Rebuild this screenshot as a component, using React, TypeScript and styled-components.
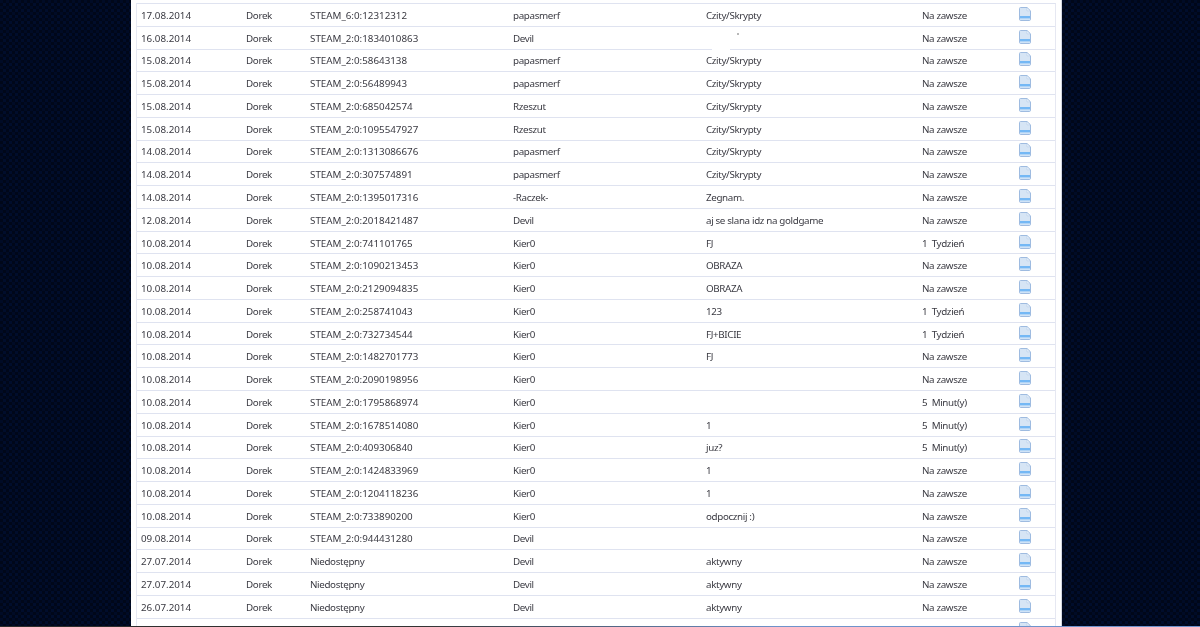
import React from 'react'
import styled, { createGlobalStyle } from 'styled-components'

type Ban = [string, string, string, string, string]

const bans: Ban[] = [
  ['17.08.2014', 'STEAM_6:0:12312312', 'papasmerf', 'Czity/Skrypty', 'Na zawsze'],
  ['16.08.2014', 'STEAM_2:0:1834010863', 'Devil', '', 'Na zawsze'],
  ['15.08.2014', 'STEAM_2:0:58643138', 'papasmerf', 'Czity/Skrypty', 'Na zawsze'],
  ['15.08.2014', 'STEAM_2:0:56489943', 'papasmerf', 'Czity/Skrypty', 'Na zawsze'],
  ['15.08.2014', 'STEAM_2:0:685042574', 'Rzeszut', 'Czity/Skrypty', 'Na zawsze'],
  ['15.08.2014', 'STEAM_2:0:1095547927', 'Rzeszut', 'Czity/Skrypty', 'Na zawsze'],
  ['14.08.2014', 'STEAM_2:0:1313086676', 'papasmerf', 'Czity/Skrypty', 'Na zawsze'],
  ['14.08.2014', 'STEAM_2:0:307574891', 'papasmerf', 'Czity/Skrypty', 'Na zawsze'],
  ['14.08.2014', 'STEAM_2:0:1395017316', '-Raczek-', 'Zegnam.', 'Na zawsze'],
  ['12.08.2014', 'STEAM_2:0:2018421487', 'Devil', 'aj se slana idz na goldgame', 'Na zawsze'],
  ['10.08.2014', 'STEAM_2:0:741101765', 'Kier0', 'FJ', '1  Tydzień'],
  ['10.08.2014', 'STEAM_2:0:1090213453', 'Kier0', 'OBRAZA', 'Na zawsze'],
  ['10.08.2014', 'STEAM_2:0:2129094835', 'Kier0', 'OBRAZA', 'Na zawsze'],
  ['10.08.2014', 'STEAM_2:0:258741043', 'Kier0', '123', '1  Tydzień'],
  ['10.08.2014', 'STEAM_2:0:732734544', 'Kier0', 'FJ+BICIE', '1  Tydzień'],
  ['10.08.2014', 'STEAM_2:0:1482701773', 'Kier0', 'FJ', 'Na zawsze'],
  ['10.08.2014', 'STEAM_2:0:2090198956', 'Kier0', '', 'Na zawsze'],
  ['10.08.2014', 'STEAM_2:0:1795868974', 'Kier0', '', '5  Minut(y)'],
  ['10.08.2014', 'STEAM_2:0:1678514080', 'Kier0', '1', '5  Minut(y)'],
  ['10.08.2014', 'STEAM_2:0:409306840', 'Kier0', 'juz?', '5  Minut(y)'],
  ['10.08.2014', 'STEAM_2:0:1424833969', 'Kier0', '1', 'Na zawsze'],
  ['10.08.2014', 'STEAM_2:0:1204118236', 'Kier0', '1', 'Na zawsze'],
  ['10.08.2014', 'STEAM_2:0:733890200', 'Kier0', 'odpocznij :)', 'Na zawsze'],
  ['09.08.2014', 'STEAM_2:0:944431280', 'Devil', '', 'Na zawsze'],
  ['27.07.2014', 'Niedostępny', 'Devil', 'aktywny', 'Na zawsze'],
  ['27.07.2014', 'Niedostępny', 'Devil', 'aktywny', 'Na zawsze'],
  ['26.07.2014', 'Niedostępny', 'Devil', 'aktywny', 'Na zawsze'],
]

const dots = encodeURIComponent(
  '<svg xmlns="http://www.w3.org/2000/svg" width="6" height="6"><rect width="6" height="6" fill="#000719"/><rect x="0" y="0" width="3" height="3" fill="#000b26"/><rect x="3" y="3" width="3" height="3" fill="#000d2c"/></svg>',
)

const GlobalStyle = createGlobalStyle`
  html, body {
    margin: 0;
    height: 627px;
    overflow: hidden;
    background: #000719 url("data:image/svg+xml,${dots}");
    font-family: "Noto Sans", sans-serif;
  }
`

const Page = styled.div`
  height: 627px;
  overflow: hidden;
  display: flex;
  justify-content: flex-start;
  padding-left: 131px;
  box-sizing: border-box;
`

const Card = styled.main`
  width: 931px;
  height: 627px;
  box-sizing: border-box;
  padding: 3px 5px 0;
  background: #fff;
  border-right: 1px solid #d5d8e2;
`

const List = styled.div`
  border-left: 1px solid #e6e8f2;
  border-right: 1px solid #e6e8f2;
  border-top: 1px solid #dfe3f0;
  filter: blur(0.35px);
`

const Row = styled.div`
  position: relative;
  display: grid;
  grid-template-columns: 105px 64px 203px 193px 216px 97px 1fr;
  align-items: center;
  height: 22.77px;
  box-sizing: border-box;
  border-bottom: 1px solid #dfe3f0;
`

const Cell = styled.span<{ $tight?: boolean }>`
  padding: 2px 0 0 4px;
  font-size: 9.8px;
  line-height: 12px;
  letter-spacing: ${({ $tight }) => ($tight ? '-0.35px' : '0')};
  color: #3a3a42;
  white-space: pre;
`

const IconCell = styled.span`
  display: flex;
  align-items: center;
  padding: 0 0 2px 4px;
  box-sizing: border-box;
  height: 100%;
`

const Patch = styled.span`
  position: absolute;
  left: 575px;
  bottom: -1px;
  width: 18px;
  height: 2px;
  background: #fff;
`

const Speck = styled.span`
  position: absolute;
  left: 600px;
  top: 6px;
  width: 2px;
  height: 2px;
  background: #b8b8b8;
`

const BottomLine = styled.div`
  position: fixed;
  left: 0;
  right: 0;
  bottom: 0;
  height: 1px;
  background: linear-gradient(90deg, #2d2d2d 0%, #333 35%, #6f93cb 65%, #6f93cb 100%);
`

const DocIcon = () => (
  <svg width="12" height="14" viewBox="0 0 12 14" aria-hidden="true">
    <path
      d="M1.5.5H8L11.5 3.8V12.2a1.3 1.3 0 0 1-1.3 1.3H1.8A1.3 1.3 0 0 1 .5 12.2V1.5A1 1 0 0 1 1.5.5Z"
      fill="#d6e5f5"
      stroke="#9ebbe0"
    />
    <path d="M8 .8V3.8H11.2Z" fill="#f3f8fd" stroke="#b3cbe8" strokeWidth=".6" />
    <rect x="1" y="9" width="10" height="2.6" fill="#74b8f5" />
    <rect x="1" y="11.6" width="10" height="1.4" fill="#cfe3f7" />
  </svg>
)

export default function App() {
  return (
    <>
      <GlobalStyle />
      <Page>
        <Card>
          <List>
            {bans.map(([date, steamId, admin, reason, length], i) => (
              <Row key={i}>
                <Cell>{date}</Cell>
                <Cell $tight>Dorek</Cell>
                <Cell $tight={!steamId.startsWith('STEAM')}>{steamId}</Cell>
                <Cell $tight>{admin}</Cell>
                <Cell $tight>{reason}</Cell>
                <Cell $tight>{length}</Cell>
                <IconCell>
                  <DocIcon />
                </IconCell>
                {i === 1 && (
                  <>
                    <Speck />
                    <Patch />
                  </>
                )}
              </Row>
            ))}
            <Row>
              <Cell />
              <Cell />
              <Cell />
              <Cell />
              <Cell />
              <Cell />
              <IconCell>
                <DocIcon />
              </IconCell>
            </Row>
          </List>
        </Card>
      </Page>
      <BottomLine />
    </>
  )
}
